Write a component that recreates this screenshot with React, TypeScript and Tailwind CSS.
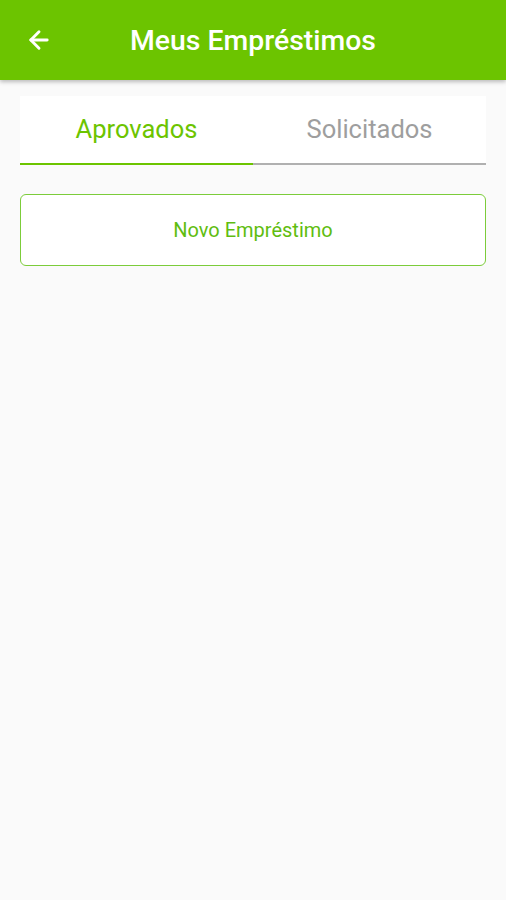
import { ArrowLeft } from "lucide-react";

export default function App() {
  return (
    <div className="min-h-[900px] bg-[#fafafa] font-['Roboto',sans-serif]">
      <header className="h-[80px] bg-[#6cc400] flex items-center shadow-[0_2px_4px_rgba(0,0,0,0.25)] relative">
        <button className="ml-[24px] w-[30px] h-[30px] grid place-items-center text-white">
          <ArrowLeft size={28} strokeWidth={2.5} />
        </button>
        <h1 className="ml-[76px] mt-[3px] text-white text-[28.4px] leading-none font-medium">Meus Empréstimos</h1>
      </header>

      <div className="px-[20px] pt-[16px]">
        <div className="bg-white flex">
          <div className="flex-1 h-[69px] flex items-center justify-center border-b-2 border-[#6cc400]">
            <span className="text-[25.5px] text-[#6cc400]">Aprovados</span>
          </div>
          <div className="flex-1 h-[69px] flex items-center justify-center border-b-2 border-[#b0b0b0]">
            <span className="text-[25.5px] text-[#9e9e9e]">Solicitados</span>
          </div>
        </div>

        <button className="mt-[29px] w-full h-[72px] bg-white border-[1.5px] border-[#7ccc3a] rounded-[6px] text-[20px] text-[#5fbd10]">
          Novo Empréstimo
        </button>
      </div>
    </div>
  );
}
